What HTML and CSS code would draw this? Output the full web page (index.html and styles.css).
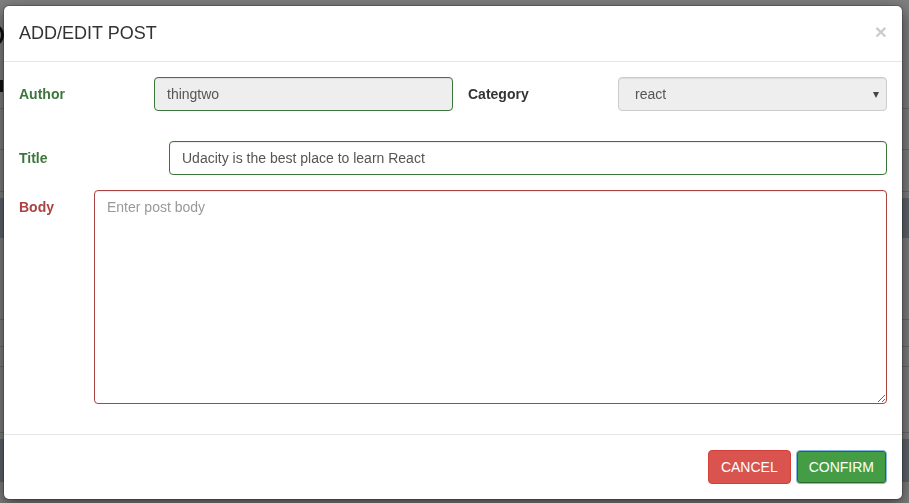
FILE: index.html
```html
<!DOCTYPE html>
<html lang="en">
<head>
<meta charset="utf-8">
<title>Add/Edit Post</title>
<link rel="stylesheet" href="styles.css">
</head>
<body>
<div class="page">
  <div class="page-top">
    <span class="page-brand"></span>
    <span class="page-mark"></span>
  </div>
  <div class="page-row r1"></div>
  <div class="page-row r2"></div>
  <div class="page-band b1"></div>
  <div class="page-row r3"></div>
  <div class="page-row r4"></div>
  <div class="page-row r5"></div>
  <div class="page-row r6"></div>
  <div class="page-band b2"></div>
</div>
<div class="backdrop"></div>
<div class="modal">
  <div class="modal-header">
    <button class="close" type="button" aria-label="Close">×</button>
    <h4 class="modal-title">ADD/EDIT POST</h4>
  </div>
  <div class="modal-body">
    <div class="form-row">
      <label class="control-label label-author ok">Author</label>
      <input class="form-control author-input ok-border" type="text" value="thingtwo" readonly>
      <label class="control-label label-category">Category</label>
      <div class="select-wrap">
        <select class="form-control select-input" disabled>
          <option>react</option>
        </select>
        <span class="caret"></span>
      </div>
    </div>
    <div class="form-row row-title">
      <label class="control-label label-title ok">Title</label>
      <input class="form-control title-input ok-border" type="text" value="Udacity is the best place to learn React">
    </div>
    <div class="form-row row-body">
      <label class="control-label label-body err">Body</label>
      <textarea class="form-control body-input err-border" placeholder="Enter post body"></textarea>
    </div>
  </div>
  <div class="modal-footer">
    <button class="btn btn-danger" type="button">CANCEL</button>
    <button class="btn btn-success" type="button">CONFIRM</button>
  </div>
</div>
</body>
</html>
```

FILE: styles.css
```css
* {
  box-sizing: border-box;
}

html, body {
  margin: 0;
  padding: 0;
  height: 100%;
  overflow: hidden;
}

body {
  font-family: "Liberation Sans", Arial, Helvetica, sans-serif;
  font-size: 14px;
  line-height: 20px;
  color: #333;
  background: #fff;
}

/* underlying page, visible through the backdrop */
.page {
  width: 909px;
}

.page-top {
  height: 109px;
  border-bottom: 1px solid #d4d4d4;
  display: flex;
  flex-direction: column;
  padding-top: 25px;
}

.page-brand {
  display: block;
  width: 16px;
  height: 20px;
  margin-left: -12px;
  border: 3px solid #222;
  border-left-color: transparent;
  border-radius: 50%;
}

.page-mark {
  display: block;
  width: 3px;
  height: 12px;
  margin-top: 35px;
  background: #222;
}

.page-row {
  border-bottom: 1px solid #d4d4d4;
}

.r1 { height: 41px; }
.r2 { height: 42px; }
.b1 { height: 40px; margin-top: 6px; background: #bccbd8; }
.r3 { height: 82px; }
.r4 { height: 27px; }
.r5 { height: 20px; }
.r6 { height: 66px; }
.b2 { height: 43px; margin-top: 6px; background: #bccbd8; }

.backdrop {
  position: fixed;
  inset: 0;
  background: rgba(0, 0, 0, 0.5);
}

/* modal */
.modal {
  position: fixed;
  top: 5px;
  left: 3px;
  width: 900px;
  background: #fff;
  border: 1px solid rgba(0, 0, 0, 0.2);
  border-radius: 6px;
  box-shadow: 0 5px 15px rgba(0, 0, 0, 0.5);
  background-clip: padding-box;
}

.modal-header {
  padding: 15px 15px 16px;
  border-bottom: 1px solid #e5e5e5;
}

.modal-title {
  margin: 0;
  font-size: 18px;
  line-height: 24px;
  font-weight: 500;
  color: #333;
}

.close {
  float: right;
  margin-top: 0;
  padding: 0;
  border: 0;
  background: transparent;
  font-family: "Liberation Sans", Arial, sans-serif;
  font-size: 21px;
  font-weight: bold;
  line-height: 21px;
  color: #000;
  opacity: 0.2;
  text-shadow: 0 1px 0 #fff;
  cursor: pointer;
}

.modal-body {
  padding: 15px 15px 30px;
}

.form-row {
  display: flex;
  align-items: flex-start;
}

.row-title {
  margin-top: 30px;
}

.row-body {
  margin-top: 15px;
}

.control-label {
  padding-top: 7px;
  font-weight: bold;
  line-height: 20px;
  flex: none;
}

.ok { color: #3c763d; }
.err { color: #a94442; }

.label-author { width: 135px; }
.label-category { width: 150px; margin-left: 15px; color: #333; }
.label-title { width: 150px; }
.label-body { width: 75px; }

.form-control {
  display: block;
  height: 34px;
  padding: 6px 12px;
  font-family: "Liberation Sans", Arial, sans-serif;
  font-size: 14px;
  line-height: 20px;
  color: #555;
  background: #fff;
  border: 1px solid #ccc;
  border-radius: 4px;
  box-shadow: inset 0 1px 1px rgba(0, 0, 0, 0.075);
  outline: none;
  margin: 0;
}

.ok-border { border-color: #3c763d; }
.err-border { border-color: #a94442; }

.author-input {
  width: 299px;
  background: #eee;
}

.select-wrap {
  position: relative;
  width: 269px;
}

.select-input {
  width: 100%;
  background: #eee;
  -webkit-appearance: none;
  appearance: none;
  padding-left: 16px;
  opacity: 1;
  color: #555;
}

.caret {
  position: absolute;
  right: 8px;
  top: 15px;
  width: 0;
  height: 0;
  border-left: 3.5px solid transparent;
  border-right: 3.5px solid transparent;
  border-top: 6px solid #444;
}

.title-input {
  width: 718px;
}

.body-input {
  width: 793px;
  height: 214px;
  resize: both;
}

.body-input::placeholder {
  color: #999;
}

.modal-footer {
  display: flex;
  justify-content: flex-end;
  gap: 5px;
  padding: 15px;
  border-top: 1px solid #e5e5e5;
}

.btn {
  display: inline-block;
  padding: 6px 12px;
  font-family: "Liberation Sans", Arial, sans-serif;
  font-size: 14px;
  line-height: 20px;
  font-weight: normal;
  color: #fff;
  border: 1px solid transparent;
  border-radius: 4px;
  cursor: pointer;
}

.btn-danger {
  background: #d9534f;
  border-color: #d43f3a;
}

.btn-success {
  background: #449d44;
  border-color: #8ab6e6;
  box-shadow: inset 0 0 0 1px #2b6a2b;
}
```
